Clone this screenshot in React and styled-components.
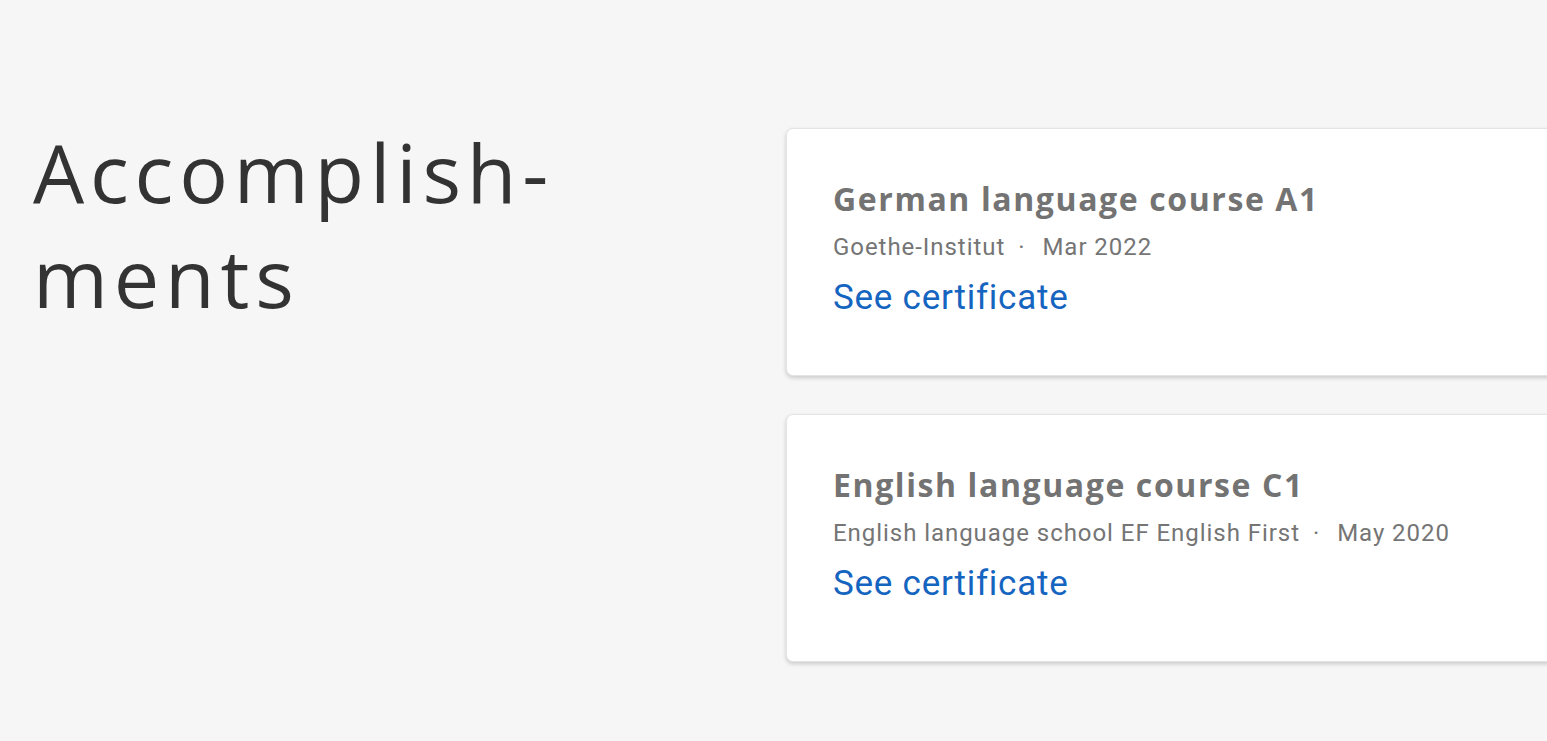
import styled, { createGlobalStyle } from "styled-components";

const accomplishments = [
  {
    title: "German language course A1",
    issuer: "Goethe-Institut",
    date: "Mar 2022",
  },
  {
    title: "English language course C1",
    issuer: "English language school EF English First",
    date: "May 2020",
  },
];

export default function App() {
  return (
    <>
      <GlobalStyle />
      <Section>
        <Heading>
          Accomplish-
          <br />
          ments
        </Heading>

        <CardList>
          {accomplishments.map((item) => (
            <Card key={item.title}>
              <CardTitle>{item.title}</CardTitle>
              <Meta>
                {item.issuer}
                <Dot>·</Dot>
                {item.date}
              </Meta>
              <CertLink href="#">See certificate</CertLink>
            </Card>
          ))}
        </CardList>
      </Section>
    </>
  );
}

/* ---------------- STYLES ---------------- */

const GlobalStyle = createGlobalStyle`
  html, body {
    margin: 0;
    padding: 0;
    background: #f6f6f6;
    overflow: hidden;
  }

  body {
    font-family: Roboto, "Liberation Sans", sans-serif;
  }
`;

const Section = styled.section`
  display: flex;
  align-items: flex-start;
  min-height: 741px;
  padding: 128px 0 0 33px;
  box-sizing: border-box;
`;

const Heading = styled.h2`
  flex: 0 0 753px;
  margin: 0;
  margin-top: -9px;
  font-family: "Open Sans", "DejaVu Sans", sans-serif;
  font-weight: 400;
  font-size: 81px;
  line-height: 105px;
  letter-spacing: 5.8px;
  color: #333333;
`;

const CardList = styled.div`
  flex: 0 0 820px;
  display: flex;
  flex-direction: column;
  gap: 38px;
`;

const Card = styled.article`
  display: flex;
  flex-direction: column;
  height: 248px;
  box-sizing: border-box;
  padding: 50px 46px 0;
  background: #ffffff;
  border: 1px solid #e4e4e4;
  border-radius: 7px;
  box-shadow: 0 2px 4px rgba(0, 0, 0, 0.18);
`;

const CardTitle = styled.h3`
  margin: 0;
  font-family: "Open Sans", "DejaVu Sans", sans-serif;
  font-weight: 700;
  font-size: 32px;
  line-height: 40px;
  letter-spacing: 1.6px;
  color: #737373;
`;

const Meta = styled.div`
  margin-top: 13px;
  font-size: 24px;
  line-height: 30px;
  letter-spacing: 0.95px;
  color: #757575;
`;

const Dot = styled.span`
  display: inline-block;
  margin: 0 17px 0 13px;
`;

const CertLink = styled.a`
  margin-top: 14px;
  font-size: 35px;
  line-height: 44px;
  letter-spacing: 0.75px;
  color: #1565c0;
  text-decoration: none;
  align-self: flex-start;
`;
